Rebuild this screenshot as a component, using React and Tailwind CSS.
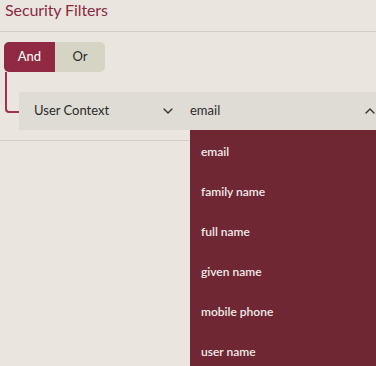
import React from "react";
import { ChevronDown, ChevronUp } from "lucide-react";

const items = ["email", "family name", "full name", "given name", "mobile phone", "user name"];

export default function App() {
  return (
    <div className="relative w-[376px] h-[366px] overflow-hidden bg-[#eae6df] font-['Lato',sans-serif]">
      <div className="h-[32px] border-b border-[#d2cec7] pl-[5px]">
        <div className="text-[16px] leading-[20px] text-[#8b2a44] tracking-[-0.1px]">Security Filters</div>
      </div>
      <div className="pl-[4px] pt-[10px]">
        <div className="flex w-[101px] h-[30px] rounded-[5px] overflow-hidden text-[13px]">
          <div className="w-[51px] bg-[#8f2a42] text-white flex items-center justify-center">And</div>
          <div className="w-[50px] bg-[#d6d4c4] text-[#2b2b2b] flex items-center justify-center">Or</div>
        </div>
      </div>
      <div className="flex items-start pl-[5px]">
        <div className="w-[14px] h-[41px] border-l-2 border-b-2 border-[#a2334a] rounded-bl-[4px]" />
        <div className="mt-[20px] flex-1 h-[38px] bg-[#dfdcd5] flex items-center text-[13px] text-[#2b2b2b]">
          <div className="w-[169px] flex items-center pl-[15px] pr-[12px]">
            <span className="flex-1">User Context</span>
            <ChevronDown size={16} strokeWidth={2} className="text-[#333]" />
          </div>
          <div className="flex-1 flex items-center pl-[2px] -mr-[2px]">
            <span className="flex-1">email</span>
            <ChevronUp size={16} strokeWidth={2} className="text-[#333]" />
          </div>
        </div>
      </div>
      <div className="mt-[10px] border-b border-[#d2cec7]" />
      <div className="absolute left-[190px] top-[130px] w-[186px] h-[240px] bg-[#6e2733] pt-[2px]">
        {items.map((t) => (
          <div key={t} className="h-[40px] flex items-center pl-[11px] text-[12px] font-semibold text-[#f3eaea]">
            {t}
          </div>
        ))}
      </div>
    </div>
  );
}
